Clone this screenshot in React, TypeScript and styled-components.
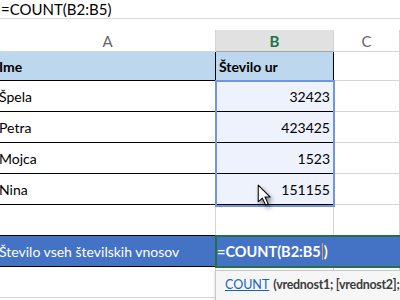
import React from 'react';
import styled, { createGlobalStyle } from 'styled-components';

const GlobalStyle = createGlobalStyle`
	html, body {
		margin: 0;
		padding: 0;
		background: #fff;
		overflow: hidden;
	}
	body {
		font-family: Lato, 'Liberation Sans', sans-serif;
	}
`;

const Sheet = styled.div`
	position: relative;
	width: 400px;
	height: 300px;
	overflow: hidden;
	background: #fff;
`;

const FormulaBar = styled.div`
	height: 18px;
	border-bottom: 1px solid #d9d9d9;
	padding-left: 1px;
	font-size: 15px;
	line-height: 18px;
	color: #000;
	white-space: nowrap;
	margin-bottom: 11px;
`;

const Row = styled.div<{ $h: number }>`
	display: grid;
	grid-template-columns: 216px 118px 1fr;
	height: ${p => p.$h}px;
`;

const ColHead = styled.div<{ $active?: boolean }>`
	display: flex;
	align-items: center;
	justify-content: center;
	font-size: 15px;
	font-weight: ${p => (p.$active ? 700 : 400)};
	color: ${p => (p.$active ? '#217346' : '#666')};
	background: ${p => (p.$active ? '#e1e1e1' : '#fff')};
	border-bottom: 1px solid ${p => (p.$active ? '#a6a6a6' : '#d4d4d4')};
	border-right: 1px solid #d4d4d4;
`;

type Tone = 'plain' | 'head' | 'sel' | 'total';

const bg: Record<Tone, string> = {
	plain: '#fff',
	head: '#bdd7ee',
	sel: '#eef2fc',
	total: '#4472c4',
};

const Cell = styled.div<{
	$tone?: Tone;
	$bottom?: string;
	$right?: string;
	$align?: 'left' | 'right';
	$bold?: boolean;
}>`
	display: flex;
	align-items: center;
	justify-content: ${p => (p.$align === 'right' ? 'flex-end' : 'flex-start')};
	padding: 0 3px;
	background: ${p => bg[p.$tone || 'plain']};
	color: ${p => (p.$tone === 'total' ? '#fff' : '#000')};
	font-size: 14px;
	font-weight: ${p => (p.$bold ? 700 : 400)};
	border-bottom: 1px solid ${p => p.$bottom || '#d4d4d4'};
	border-right: 1px solid ${p => p.$right || '#d4d4d4'};
	white-space: nowrap;
	overflow: hidden;
	box-sizing: border-box;
`;

const NameCell = styled(Cell)`
	padding-left: 0;
	text-indent: -1px;
`;

const EditCell = styled.div`
	grid-column: 2 / span 2;
	display: flex;
	align-items: center;
	background: #4472c4;
	border: 2px solid #217346;
	border-right: none;
	margin: -1px 0 -1px -1px;
	color: #fff;
	font-size: 14.5px;
	font-weight: 700;
	white-space: nowrap;
	position: relative;
	z-index: 2;
`;

const Caret = styled.span`
	display: inline-block;
	width: 1px;
	height: 17px;
	background: #f0a030;
	margin: 0 1px;
`;

const Selection = styled.div`
	position: absolute;
	left: 215px;
	top: 80px;
	width: 116px;
	height: 123px;
	border: 2px solid #6f95e6;
	pointer-events: none;
	z-index: 1;
`;

const Tip = styled.div`
	position: absolute;
	left: 215px;
	top: 270px;
	width: 200px;
	height: 32px;
	background: #f6f6f6;
	border: 1px solid #c8c8c8;
	box-shadow: 0 1px 3px rgba(0, 0, 0, 0.15);
	padding: 6px 0 0 9px;
	box-sizing: border-box;
	font-family: Lato, 'Liberation Sans', sans-serif;
	font-size: 12.5px;
	white-space: nowrap;
	color: #444;
	z-index: 3;
`;

const TipLink = styled.span`
	color: #1565c0;
	text-decoration: underline;
	margin-right: 4px;
`;

const TipArgs = styled.span`
	font-weight: 700;
	color: #3c3c3c;
	letter-spacing: -0.3px;
`;

const Pointer = styled.svg`
	position: absolute;
	left: 257px;
	top: 184px;
	z-index: 4;
	filter: drop-shadow(2px 3px 2px rgba(0, 0, 0, 0.45));
`;

const people = [
	['Špela', '32423'],
	['Petra', '423425'],
	['Mojca', '1523'],
	['Nina', '151155'],
];

export default function App() {
	return (
		<Sheet>
			<GlobalStyle />
			<FormulaBar>=COUNT(B2:B5)</FormulaBar>
			<Row $h={22}>
				<ColHead>A</ColHead>
				<ColHead $active>B</ColHead>
				<ColHead>C</ColHead>
			</Row>
			<Row $h={29}>
				<NameCell $tone="head" $bold $bottom="#000" $right="#000">
					Ime
				</NameCell>
				<Cell $tone="head" $bold $bottom="#000" $right="#000">
					Število ur
				</Cell>
				<Cell />
			</Row>
			{people.map(([name, hours]) => (
				<Row $h={31} key={name}>
					<NameCell $bottom="#000">{name}</NameCell>
					<Cell $tone="sel" $align="right" $bottom="#000">
						{hours}
					</Cell>
					<Cell />
				</Row>
			))}
			<Row $h={31}>
				<Cell $bottom="#000" />
				<Cell />
				<Cell />
			</Row>
			<Row $h={31}>
				<NameCell $tone="total" $bottom="#000" $right="#000">
					Število vseh številskih vnosov
				</NameCell>
				<EditCell>
					=COUNT(B2:B5
					<Caret />)
				</EditCell>
			</Row>
			<Row $h={31}>
				<Cell />
				<Cell />
				<Cell />
			</Row>
			<Selection />
			<Tip>
				<TipLink>COUNT</TipLink>
				<TipArgs>(vrednost1; [vrednost2]; ...)</TipArgs>
			</Tip>
			<Pointer width="15" height="23" viewBox="0 0 14 22">
				<path
					d="M1 1 L1 17 L5 13.5 L8 20 L10.5 19 L7.5 12.5 L12.5 12.5 Z"
					fill="#fff"
					stroke="#000"
					strokeWidth="1"
					strokeLinejoin="round"
				/>
			</Pointer>
		</Sheet>
	);
}
